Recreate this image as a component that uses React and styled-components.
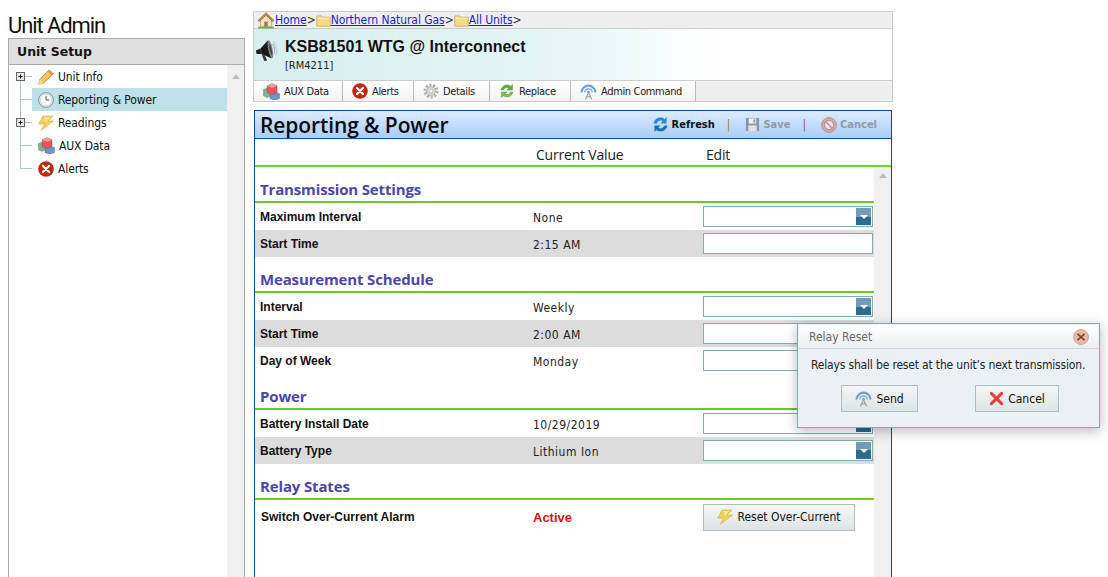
import React from "react";
import styled, { createGlobalStyle } from "styled-components";

const UI = `"DejaVu Sans Condensed", "DejaVu Sans", sans-serif`;

const Global = createGlobalStyle`
  html, body { margin: 0; padding: 0; height: 100%; overflow: hidden; background: #fff; }
  * { box-sizing: border-box; }
  body { font-family: ${UI}; font-size: 12px; color: #111; }
`;

const Page = styled.div`
  display: flex; gap: 8px; height: 577px; padding-left: 8px; overflow: hidden; position: relative;
`;
const Side = styled.aside`
  width: 237px; flex: none; display: flex; flex-direction: column;
`;
const PageTitle = styled.h1`
  margin: 0; height: 38px; padding-top: 13px; font: 400 22px/26px Roboto, sans-serif; letter-spacing: -1.1px; color: #111;
`;
const SidePanel = styled.section`
  flex: 1; display: flex; flex-direction: column; border: 1px solid #aaa; border-bottom: 0; min-height: 0;
`;
const SideHead = styled.div`
  height: 26px; flex: none; background: #e0e0e0; border-bottom: 1px solid #aaa; padding-left: 8px;
  font: 700 12.5px/25px "DejaVu Sans", sans-serif; color: #111;
`;
const SideBody = styled.div`
  flex: 1; display: flex; min-height: 0;
`;
const Tree = styled.ul`
  flex: 1; margin: 0; padding: 0; list-style: none;
`;
const TreeRow = styled.li`
  display: flex; height: 23px; align-items: stretch;
`;
const TreeLabel = styled.div`
  flex: 1; display: flex; align-items: center; gap: 4px; padding-left: 6px; font-size: 12px; letter-spacing: -0.12px;
  background: ${p => (p.$active ? "#bee0e8" : "transparent")};
`;
const Scroll = styled.div`
  flex: none; width: 17px; background: #f0f0f0; display: flex; justify-content: center; align-items: flex-start; padding-top: ${p => p.$top}px;
  &::before { content: ""; width: 0; height: 0; border: 4px solid transparent; border-top: 0; border-bottom: 5px solid #bdbdbd; }
`;

const Main = styled.main`
  width: 640px; flex: none; padding-top: 11px; display: flex; flex-direction: column;
`;
const Crumbs = styled.nav`
  height: 18px; background: #eee; border: 1px solid #ccc;
  display: flex; align-items: center; padding-left: 3px; font-size: 12px; letter-spacing: -0.06px; color: #333;
  a { color: #1a1ae6; text-decoration: underline; }
`;
const Crumb = styled.span`
  margin-right: 0;
`;
const UnitHead = styled.header`
  height: 51px; display: flex; align-items: flex-start; gap: 4px; padding: 8px 0 0 1px;
  border-left: 1px solid #ccc; border-right: 1px solid #ccc;
  background: linear-gradient(90deg, #d6eeee 0, #e6f5f5 50%, #ffffff 73%);
`;
const UnitText = styled.div`
  display: flex; flex-direction: column;
`;
const UnitName = styled.div`
  font: 700 16px/20px "Liberation Sans", Arial, sans-serif; color: #111;
`;
const UnitCode = styled.div`
  font-size: 11px; line-height: 15px; margin-top: 1px; color: #222;
`;
const Tabs = styled.div`
  height: 22px; display: flex; background: #eee; border: 1px solid #ccc;
`;
const Tab = styled.div`
  width: ${p => p.$w}px; flex: none; display: flex; align-items: center; gap: 4px; padding-left: 9px;
  background: linear-gradient(#fff, #f2f2f2); border-right: 1px solid #bbb; font-size: 11px; letter-spacing: -0.35px; color: #222;
`;

const Card = styled.section`
  margin: 8px 1px 0 1px; flex: 1; border: 1px solid #0b4a97; border-bottom: 0; display: flex; flex-direction: column; min-height: 0;
`;
const CardBar = styled.div`
  height: 28px; flex: none; display: flex; align-items: center; justify-content: space-between; padding: 0 14px 0 5px;
  background: linear-gradient(#dcebff, #a9cdf7); border-bottom: 1px solid #0b4a97;
`;
const CardTitle = styled.h2`
  margin: 0; font: 600 21px/28px "Open Sans", sans-serif; letter-spacing: -0.1px; color: #0a0a0a;
`;
const Actions = styled.div`
  display: flex; align-items: center;
`;
const Action = styled.span`
  display: flex; align-items: center; gap: 3px; font: 700 11px/14px ${UI}; color: ${p => (p.$off ? "#8f9aa6" : "#111")};
`;
const Divider = styled.span`
  margin: 0 15px 0 12px; font-size: 12px; color: ${p => p.$c};
`;
const ColHead = styled.div`
  height: 28px; flex: none; display: grid; grid-template-columns: 281px 170px; padding-top: 6px; border-bottom: 2px solid #66dd22;
  font: 400 14px/20px "Open Sans", sans-serif; letter-spacing: -0.2px; color: #222;
`;
const ColCell = styled.span`
  grid-column: ${p => p.$col};
`;
const Scroller = styled.div`
  flex: 1; display: flex; min-height: 0;
`;
const Form = styled.div`
  flex: 1; padding-top: 14px; min-width: 0;
`;
const SectionTitle = styled.h3`
  margin: 0; padding-left: 5px; height: 22px; border-bottom: 2px solid #66cc22;
  font: 700 15px/17px "Open Sans", sans-serif; letter-spacing: -0.15px; color: #4a46ad;
`;
const Section = styled.div`
  margin-bottom: 14px;
`;
const Row = styled.div`
  display: grid; grid-template-columns: 273px 170px 170px; align-items: center; height: ${p => p.$h || 27}px; padding-left: 5px;
  background: ${p => (p.$alt ? "#dcdcdc" : "transparent")};
`;
const Label = styled.span`
  font: 700 12px/16px "Liberation Sans", Arial, sans-serif; color: #111; padding-left: ${p => p.$in || 0}px;
`;
const Value = styled.span`
  font-size: 12px; letter-spacing: 0.5px; color: #222; padding-top: 2px;
  ${p => p.$alert && `color: #e01010; font: 700 13px "Liberation Sans", sans-serif; letter-spacing: 0; padding-top: 0;`}
`;
const Field = styled.div`
  height: 21px; width: 170px; background: #fff; border: 1px solid #7fadb3; display: flex; justify-content: flex-end; align-items: stretch; padding: 1px;
`;
const SelectArrow = styled.span`
  width: 15px; display: flex; align-items: center; justify-content: center;
  background: linear-gradient(#6f9db8 0, #6f9db8 50%, #2d6a8c 50%, #2d6a8c 100%);
  &::before { content: ""; width: 0; height: 0; border: 4px solid transparent; border-top: 4px solid #fff; border-bottom: 0; }
`;
const Button = styled.button`
  display: flex; align-items: center; justify-content: center; gap: 4px; height: ${p => p.$h}px; width: ${p => p.$w}px; padding: 0;
  border: 1px solid #b0bcc0; background: linear-gradient(#f4f6f6, #dde3e4); font: 400 12px ${UI}; color: #111;
`;

const Dialog = styled.div`
  position: absolute; left: 797px; top: 323px; width: 303px; height: 105px; background: #eaf0f4; border: 1px solid #7fadb3;
  box-shadow: 0 3px 12px rgba(0,0,0,.28); display: flex; flex-direction: column;
`;
const DialogHead = styled.div`
  height: 24px; margin: 1px 1px 0; flex: none; display: flex; align-items: center; justify-content: space-between; padding: 0 9px 0 10px;
  background: linear-gradient(#ffffff, #e8eef1); border-bottom: 1px solid #d4d6d6; font-size: 12px; color: #666;
`;
const DialogText = styled.p`
  margin: 0; padding: 7px 0 0 13px; font-size: 12px; line-height: 18px; letter-spacing: -0.17px; color: #222; white-space: nowrap;
`;
const DialogButtons = styled.div`
  display: flex; gap: 57px; padding: 11px 0 0 43px;
`;

const Ico = ({ s = 16, children, vb = 16 }) => (
  <svg width={s} height={s} viewBox={`0 0 ${vb} ${vb}`} style={{ flex: "none", display: "block" }}>{children}</svg>
);
const Home = () => (
  <Ico s={18}>
    <path d="M3 8v6h10V8L8 3.5z" fill="#efe3c0" stroke="#a98d57" strokeWidth=".6" />
    <path d="M.8 8.5 8 1.5l7.2 7-1.2 1L8 3.8 2 9.5z" fill="#c98a45" stroke="#8a5a2a" strokeWidth=".5" />
    <rect x="6.5" y="9.5" width="3" height="4.5" fill="#9a7a4a" />
    <path d="M1 14h14v1.6H1z" fill="#7fa860" />
  </Ico>
);
const Folder = () => (
  <Ico s={15}>
    <path d="M.8 3h5l1.2 1.5h8.2v9.5H.8z" fill="#f7d98a" stroke="#cda24d" strokeWidth=".8" />
    <path d="M1.5 5.5h13" stroke="#fff3c9" strokeWidth="1" />
  </Ico>
);
const Megaphone = () => (
  <Ico s={26} vb={26}>
    <g transform="rotate(-12 13 13)">
      <path d="M1 11l5-1v5.5l-5-1z" fill="#222" />
      <path d="M6 10l9-6.5v18.5l-9-6.5z" fill="#1a1a1a" />
      <path d="M6 15.5l2.5 1 1.5 6.5H7z" fill="#333" />
      <ellipse cx="15.5" cy="12.8" rx="2.2" ry="9.2" fill="#8a8a8a" />
      <ellipse cx="15.8" cy="12.8" rx="1" ry="6" fill="#444" />
      <path d="M20 5.5q3 7.3 0 14.5" fill="none" stroke="#c3d2dc" strokeWidth="1.5" />
      <path d="M18.6 8q2 5 0 9.6" fill="none" stroke="#a0b0bc" strokeWidth="1" />
    </g>
  </Ico>
);
const Pencil = () => (
  <Ico>
    <path d="M.8 15.2l.9-4.7L11.2.8 15.2 4.8 5.5 14.3z" fill="#f2c75c" stroke="#b9853a" strokeWidth=".8" />
    <path d="M.8 15.2l.9-4.7 3.8 3.8z" fill="#f6dfb2" />
    <path d="M11.2.8l4 4-1.6 1.6-4-4z" fill="#e7965a" />
  </Ico>
);
const Clock = () => (
  <Ico>
    <circle cx="8" cy="8" r="7.4" fill="#e4e8ea" stroke="#8d9498" strokeWidth="1" />
    <circle cx="8" cy="8" r="5.6" fill="#fafafa" stroke="#c5cbcf" strokeWidth=".6" />
    <path d="M8 4v4h3.5" fill="none" stroke="#444" strokeWidth=".9" />
  </Ico>
);
const Bolt = () => (
  <Ico>
    <path d="M5 1h10l-5 5h5.5L3 15.5 6.5 9H.8z" fill="#f4cf5c" stroke="#d9a93a" strokeWidth=".6" />
    <path d="M6 2.2h6l-4 4.5" fill="#fae7a2" />
  </Ico>
);
const Cubes = () => (
  <Ico s={17}>
    <path d="M.4 6.2 3.5 5 7 6.2v6L3.7 13.6.4 12z" fill="#7fb38a" stroke="#58805f" strokeWidth=".4" />
    <path d="M6.6 10 11 8.4 15.6 10v4.6L11 16.2 6.6 14.6z" fill="#6b94cc" stroke="#46689a" strokeWidth=".4" />
    <path d="M4 2.6 8.6.6 13.2 2.6v6.2L8.6 11 4 8.8z" fill="#e8555a" stroke="#b23238" strokeWidth=".4" />
    <path d="M4 2.6 8.6 4.6 13.2 2.6 8.6.6z" fill="#f49a9a" />
  </Ico>
);
const Xc = () => (
  <Ico>
    <circle cx="8" cy="8" r="7.8" fill="#c02a12" />
    <path d="M5 5l6 6M11 5l-6 6" stroke="#fff" strokeWidth="2.2" strokeLinecap="round" />
  </Ico>
);
const Gear = () => (
  <Ico>
    <circle cx="8" cy="8" r="6" fill="none" stroke="#b3b3b3" strokeWidth="3" strokeDasharray="2.2 1.5" />
    <circle cx="8" cy="8" r="4.4" fill="#dcdcdc" stroke="#a6a6a6" strokeWidth=".8" />
    <circle cx="8" cy="8" r="2" fill="#fff" stroke="#aaa" strokeWidth=".7" />
  </Ico>
);
const Recycle = () => (
  <Ico>
    <path d="M2 7c.5-3 3-5 6-5 1.5 0 2.8.5 3.6 1.2L13.5 1.5V7H8l2-1.8C9.5 4.7 8.8 4.5 8 4.5 6.4 4.5 5 5.5 4.5 7z" fill="#5fae3c" stroke="#3f8426" strokeWidth=".4" />
    <path d="M14 9c-.5 3-3 5-6 5-1.5 0-2.8-.5-3.6-1.2L2.5 14.5V9H8l-2 1.8c.5.5 1.2.7 2 .7 1.6 0 3-1 3.5-2.5z" fill="#7cc455" stroke="#3f8426" strokeWidth=".4" />
  </Ico>
);
const Antenna = () => (
  <Ico s={17}>
    <path d="M1.5 9a6.5 6.5 0 0 1 13 0" fill="none" stroke="#6f9fd8" strokeWidth="2" />
    <path d="M4.5 9a3.5 3.5 0 0 1 7 0" fill="none" stroke="#8fb7e6" strokeWidth="1.6" />
    <circle cx="8" cy="8.5" r="1.3" fill="#9aa3ab" />
    <path d="M8 9l-3 6.5M8 9l3 6.5M6 13h4" fill="none" stroke="#9aa3ab" strokeWidth="1.1" />
  </Ico>
);
const Refresh = () => (
  <Ico s={17}>
    <path d="M1.5 7C2 3.8 4.6 1.5 8 1.5c1.6 0 3 .6 4 1.4L13.7 1v6H8l2-2c-.6-.5-1.2-.8-2-.8-1.8 0-3 1.2-3.5 2.8z" fill="#2a8ad8" />
    <path d="M14.5 9c-.5 3.2-3.1 5.5-6.5 5.5-1.6 0-3-.6-4-1.4L2.3 15V9H8l-2 2c.6.5 1.2.8 2 .8 1.8 0 3-1.2 3.5-2.8z" fill="#1c6fb8" />
  </Ico>
);
const Floppy = () => (
  <Ico s={15}>
    <rect x="1" y="1" width="14" height="14" fill="#8d97a3" />
    <rect x="4" y="1.5" width="8" height="5.5" fill="#eef1f4" />
    <rect x="9" y="2.5" width="2" height="3.5" fill="#8d97a3" />
    <rect x="3.5" y="9" width="9" height="6" fill="#dfe4e8" />
  </Ico>
);
const CancelOff = () => (
  <Ico>
    <circle cx="8" cy="8" r="7.4" fill="#d8a8a8" stroke="#a88" strokeWidth=".8" />
    <circle cx="8" cy="8" r="4.6" fill="#dfe8ee" stroke="#c48e8e" strokeWidth="1.2" />
    <path d="M4.8 4.8l6.4 6.4" stroke="#c48e8e" strokeWidth="1.5" />
  </Ico>
);
const RedX = () => (
  <Ico s={15}>
    <path d="M2.5 2.5l11 11M13.5 2.5l-11 11" stroke="#ee3b3b" strokeWidth="3.2" strokeLinecap="round" />
  </Ico>
);
const CloseBtn = () => (
  <Ico s={16}>
    <circle cx="8" cy="8" r="7.5" fill="#eab9a2" stroke="#c9a08c" strokeWidth=".8" />
    <path d="M4.5 4.8l7 6.4M11.5 4.8l-7 6.4" stroke="#74452f" strokeWidth="1.6" />
  </Ico>
);
const Connector = ({ plus, last, first }) => (
  <svg width="23" height="23" viewBox="0 0 23 23" style={{ flex: "none", display: "block" }}>
    <path d={`M11.5 ${first ? 11 : 0}V${last ? 11.5 : 23}M11.5 11.5H23`} stroke="#a9c6cd" strokeWidth="1" fill="none" />
    {plus && (
      <g>
        <rect x="7.5" y="7.5" width="8" height="8" fill="#e8e8e8" stroke="#666" />
        <path d="M9.5 11.5h4M11.5 9.5v4" stroke="#111" />
      </g>
    )}
  </svg>
);

const tree = [
  { label: "Unit Info", icon: <Pencil />, plus: true, first: true },
  { label: "Reporting & Power", icon: <Clock />, active: true },
  { label: "Readings", icon: <Bolt />, plus: true },
  { label: "AUX Data", icon: <Cubes /> },
  { label: "Alerts", icon: <Xc />, last: true },
];
const tabs = [
  { label: "AUX Data", icon: <Cubes />, w: 89 },
  { label: "Alerts", icon: <Xc />, w: 71 },
  { label: "Details", icon: <Gear />, w: 76 },
  { label: "Replace", icon: <Recycle />, w: 81 },
  { label: "Admin Command", icon: <Antenna />, w: 125 },
];
const sections = [
  { title: "Transmission Settings", rows: [
    ["Maximum Interval", "None", true],
    ["Start Time", "2:15 AM", false],
  ]},
  { title: "Measurement Schedule", rows: [
    ["Interval", "Weekly", true],
    ["Start Time", "2:00 AM", false],
    ["Day of Week", "Monday", false],
  ]},
  { title: "Power", rows: [
    ["Battery Install Date", "10/29/2019", true],
    ["Battery Type", "Lithium Ion", true],
  ]},
];

export default function App() {
  return (
    <Page>
      <Global />
      <Side>
        <PageTitle>Unit Admin</PageTitle>
        <SidePanel>
          <SideHead>Unit Setup</SideHead>
          <SideBody>
            <Tree>
              {tree.map(t => (
                <TreeRow key={t.label}>
                  <Connector plus={t.plus} first={t.first} last={t.last} />
                  <TreeLabel $active={t.active}>{t.icon}{t.label}</TreeLabel>
                </TreeRow>
              ))}
            </Tree>
            <Scroll $top={9} />
          </SideBody>
        </SidePanel>
      </Side>
      <Main>
        <Crumbs>
          <Home /><a>Home</a><Crumb>&gt;</Crumb>
          <Folder /><a>Northern Natural Gas</a><Crumb>&gt;</Crumb>
          <Folder /><a>All Units</a><Crumb>&gt;</Crumb>
        </Crumbs>
        <UnitHead>
          <Megaphone />
          <UnitText>
            <UnitName>KSB81501 WTG @ Interconnect</UnitName>
            <UnitCode>[RM4211]</UnitCode>
          </UnitText>
        </UnitHead>
        <Tabs>
          {tabs.map(t => <Tab key={t.label} $w={t.w}>{t.icon}{t.label}</Tab>)}
        </Tabs>
        <Card>
          <CardBar>
            <CardTitle>Reporting &amp; Power</CardTitle>
            <Actions>
              <Action><Refresh />Refresh</Action>
              <Divider $c="#a57a1c">|</Divider>
              <Action $off><Floppy />Save</Action>
              <Divider $c="#a55050">|</Divider>
              <Action $off><CancelOff />Cancel</Action>
            </Actions>
          </CardBar>
          <ColHead>
            <ColCell $col={2}>Current Value</ColCell>
            <ColCell $col={3}>Edit</ColCell>
          </ColHead>
          <Scroller>
            <Form>
              {sections.map(s => (
                <Section key={s.title}>
                  <SectionTitle>{s.title}</SectionTitle>
                  {s.rows.map((r, i) => (
                    <Row key={r[0]} $alt={i % 2 === 1}>
                      <Label>{r[0]}</Label>
                      <Value>{r[1]}</Value>
                      <Field>{r[2] && <SelectArrow />}</Field>
                    </Row>
                  ))}
                </Section>
              ))}
              <SectionTitle>Relay States</SectionTitle>
              <Row $h={34}>
                <Label $in={1}>Switch Over-Current Alarm</Label>
                <Value $alert>Active</Value>
                <Button $w={152} $h={27}><Bolt />Reset Over-Current</Button>
              </Row>
            </Form>
            <Scroll $top={6} />
          </Scroller>
        </Card>
      </Main>
      <Dialog>
        <DialogHead>Relay Reset<CloseBtn /></DialogHead>
        <DialogText>Relays shall be reset at the unit’s next transmission.</DialogText>
        <DialogButtons>
          <Button $w={77} $h={27}><Antenna />Send</Button>
          <Button $w={84} $h={27}><RedX />Cancel</Button>
        </DialogButtons>
      </Dialog>
    </Page>
  );
}
